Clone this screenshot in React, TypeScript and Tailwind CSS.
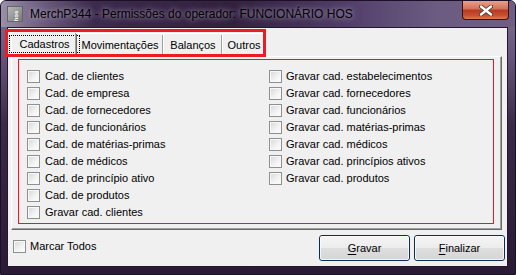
import React from "react";

const leftItems = [
  "Cad. de clientes",
  "Cad. de empresa",
  "Cad. de fornecedores",
  "Cad. de funcionários",
  "Cad. de matérias-primas",
  "Cad. de médicos",
  "Cad. de princípio ativo",
  "Cad. de produtos",
  "Gravar cad. clientes",
];

const rightItems = [
  "Gravar cad. estabelecimentos",
  "Gravar cad. fornecedores",
  "Gravar cad. funcionários",
  "Gravar cad. matérias-primas",
  "Gravar cad. médicos",
  "Gravar cad. princípios ativos",
  "Gravar cad. produtos",
];

function Check() {
  return (
    <span className="w-[13px] h-[13px] shrink-0 border border-[#8e8f8f] bg-[#f4f4f4] flex">
      <span className="flex-1 border border-[#f8f8f8] bg-[linear-gradient(135deg,#d9dbde_0%,#f3f3f3_60%,#fbfbfb_100%)]" />
    </span>
  );
}

function Row({ label, gap }: { label: string; gap: string }) {
  return (
    <div className={`h-[17px] flex items-center ${gap}`}>
      <Check />
      <span className="leading-none whitespace-nowrap">{label}</span>
    </div>
  );
}

function Tab({
  label,
  width,
  selected,
}: {
  label: string;
  width: string;
  selected?: boolean;
}) {
  if (selected) {
    return (
      <div
        className={`${width} h-[26px] -mb-px relative z-10 bg-[#f0f0f0] border-l border-t border-white flex items-center justify-center pt-[1px] rounded-tl-[2px]`}
      >
        <div className="absolute right-0 top-[1px] bottom-[1px] w-px bg-[#a0a0a0]" />
        <div className="absolute right-[-1px] top-[2px] bottom-[1px] w-px bg-[#696969]" />
        <span className="border border-dotted border-black px-[9px] h-[18px] flex items-center mt-[-2px] ml-[1px]">
          {label}
        </span>
      </div>
    );
  }
  return (
    <div
      className={`${width} h-[23px] bg-[#f0f0f0] border-l border-t border-white flex items-center justify-center relative rounded-tl-[2px]`}
    >
      <div className="absolute right-0 top-[1px] bottom-0 w-px bg-[#a0a0a0]" />
      <div className="absolute right-[-1px] top-[2px] bottom-0 w-px bg-[#696969]" />
      <span className="mt-[1px]">{label}</span>
    </div>
  );
}

function Button({ first, rest }: { first: string; rest: string }) {
  return (
    <div className="w-[91px] h-[26px] rounded-[3px] border border-[#0a2f55] bg-[linear-gradient(180deg,#f5f5f5_0%,#ececec_50%,#dedede_51%,#d6d6d6_100%)] flex">
      <div className="flex-1 rounded-[2px] border border-[#fbfbfb]/80 flex items-center justify-center">
        <span>
          <span className="underline underline-offset-[2px]">{first}</span>
          {rest}
        </span>
      </div>
    </div>
  );
}

export default function App() {
  return (
    <div className="w-[516px] h-[275px] relative overflow-hidden flex flex-col rounded-t-[6px] border border-[#1c1026] bg-[linear-gradient(180deg,#7f7392_0%,#66567a_20%,#3a2a4a_45%,#2a1a36_100%)] font-['Liberation_Sans',Arial,sans-serif] text-[11px] text-black">
      {/* Title bar */}
      <div className="h-[26px] shrink-0 flex items-start relative bg-[linear-gradient(90deg,#9a90a8_0%,#7d6f8f_5%,#3e2c4e_18%,#34223f_45%,#52406a_68%,#6c5c82_85%,#6e5e84_100%)]">
        <div className="mt-[5px] ml-[6px] w-[16px] h-[16px] bg-[linear-gradient(135deg,#b8b8b8,#7a7a7a)] border border-[#666] flex items-end justify-end">
          <span className="text-[6px] leading-none text-white font-bold -rotate-90 mb-[2px]">hos</span>
        </div>
        <div className="ml-[7px] mt-[5px] text-[12px] leading-[16px] whitespace-nowrap [text-shadow:0_0_5px_rgba(190,178,205,0.85),0_0_9px_rgba(170,158,190,0.5)] font-['Liberation_Sans',Arial,sans-serif]">
          MerchP344 - Permissões do operador: FUNCIONÁRIO HOS
        </div>
        <div className="ml-auto mr-[6px] w-[47px] h-[19px] rounded-b-[4px] border border-t-0 border-[#3d1010] bg-[linear-gradient(180deg,#e8a08a_0%,#d0705a_45%,#b83a22_50%,#c8502e_80%,#e07a50_100%)] flex items-center justify-center">
          <svg width="14" height="11" viewBox="0 0 14 11">
            <path
              d="M2 1.5 L12 9.5 M12 1.5 L2 9.5"
              stroke="#3a3a3a"
              strokeWidth="4"
              strokeLinecap="round"
            />
            <path
              d="M2 1.5 L12 9.5 M12 1.5 L2 9.5"
              stroke="#ffffff"
              strokeWidth="2.4"
              strokeLinecap="round"
            />
          </svg>
        </div>
      </div>

      {/* Client area */}
      <div className="flex-1 ml-[6px] mr-[7px] mb-[7px] bg-[#f0f0f0] border border-[#241630] flex flex-col">
        {/* Tab strip */}
        <div className="h-[25px] mt-[3px] ml-[3px] flex items-end">
          <Tab label="Cadastros" width="w-[65px]" selected />
          <Tab label="Movimentações" width="w-[87px]" />
          <Tab label="Balanços" width="w-[59px]" />
          <Tab label="Outros" width="w-[43px]" />
        </div>

        {/* Panel */}
        <div className="h-[174px] ml-[3px] mr-[5px] border-t border-l border-white border-r border-b border-r-[#696969] border-b-[#696969] shadow-[inset_-1px_-1px_0_#a0a0a0] pt-[2px] pl-[6px] pr-[7px] pb-[5px] flex">
          <div className="flex-1 border border-[#ff1020] pt-[8px] pl-[8px] grid grid-cols-[242px_1fr] content-start">
            <div className="flex flex-col">
              {leftItems.map((l) => (
                <Row key={l} label={l} gap="gap-[5px]" />
              ))}
            </div>
            <div className="flex flex-col">
              {rightItems.map((l) => (
                <Row key={l} label={l} gap="gap-[4px]" />
              ))}
            </div>
          </div>
        </div>

        {/* Bottom row */}
        <div className="flex items-start pt-[5px] pl-[5px] pr-[2px]">
          <div className="mt-[5px] flex items-center gap-[4px] h-[13px]">
            <Check />
            <span className="leading-none">Marcar Todos</span>
          </div>
          <div className="ml-auto flex gap-[4px]">
            <Button first="G" rest="ravar" />
            <Button first="F" rest="inalizar" />
          </div>
        </div>
      </div>

      {/* Red annotation around tabs */}
      <div className="absolute left-[4px] top-[28px] w-[261px] h-[28px] border-[3px] border-[#ed1c24] pointer-events-none z-20" />
    </div>
  );
}
